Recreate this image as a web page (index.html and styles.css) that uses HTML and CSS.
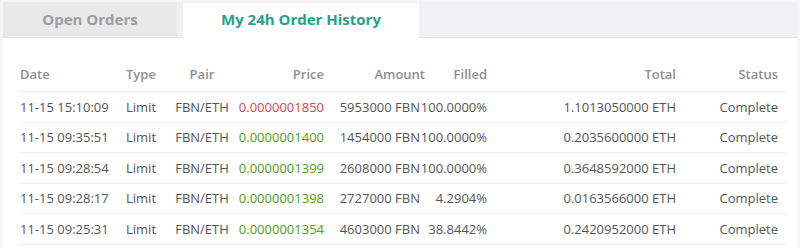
FILE: index.html
```html
<!DOCTYPE html>
<html>
<head>
<meta charset="utf-8">
<link rel="stylesheet" href="styles.css">
</head>
<body>
<div class="panel">
  <div class="tabs">
    <div class="tab tab-open">Open Orders</div>
    <div class="tab tab-active">My 24h Order History</div>
  </div>
  <div class="content">
    <div class="row head">
      <div class="c-left">Date</div>
      <div class="c-left">Type</div>
      <div class="c-center">Pair</div>
      <div class="c-right">Price</div>
      <div class="c-right amount-head">Amount</div>
      <div class="c-right">Filled</div>
      <div class="c-right">Total</div>
      <div class="c-right">Status</div>
    </div>
    <div class="row">
      <div class="c-left">11-15 15:10:09</div>
      <div class="c-left">Limit</div>
      <div class="c-center">FBN/ETH</div>
      <div class="c-right red">0.0000001850</div>
      <div class="c-right">5953000 FBN</div>
      <div class="c-right">100.0000%</div>
      <div class="c-right">1.1013050000 ETH</div>
      <div class="c-right">Complete</div>
    </div>
    <div class="row">
      <div class="c-left">11-15 09:35:51</div>
      <div class="c-left">Limit</div>
      <div class="c-center">FBN/ETH</div>
      <div class="c-right green">0.0000001400</div>
      <div class="c-right">1454000 FBN</div>
      <div class="c-right">100.0000%</div>
      <div class="c-right">0.2035600000 ETH</div>
      <div class="c-right">Complete</div>
    </div>
    <div class="row">
      <div class="c-left">11-15 09:28:54</div>
      <div class="c-left">Limit</div>
      <div class="c-center">FBN/ETH</div>
      <div class="c-right green">0.0000001399</div>
      <div class="c-right">2608000 FBN</div>
      <div class="c-right">100.0000%</div>
      <div class="c-right">0.3648592000 ETH</div>
      <div class="c-right">Complete</div>
    </div>
    <div class="row">
      <div class="c-left">11-15 09:28:17</div>
      <div class="c-left">Limit</div>
      <div class="c-center">FBN/ETH</div>
      <div class="c-right green">0.0000001398</div>
      <div class="c-right">2727000 FBN</div>
      <div class="c-right">4.2904%</div>
      <div class="c-right">0.0163566000 ETH</div>
      <div class="c-right">Complete</div>
    </div>
    <div class="row">
      <div class="c-left">11-15 09:25:31</div>
      <div class="c-left">Limit</div>
      <div class="c-center">FBN/ETH</div>
      <div class="c-right green">0.0000001354</div>
      <div class="c-right">4603000 FBN</div>
      <div class="c-right">38.8442%</div>
      <div class="c-right">0.2420952000 ETH</div>
      <div class="c-right">Complete</div>
    </div>
  </div>
</div>
</body>
</html>
```
FILE: styles.css
```css
html, body {
  margin: 0;
  padding: 0;
}
body {
  background: #f5f5f7;
  font-family: "Open Sans", "Liberation Sans", sans-serif;
  font-size: 13px;
  color: #555555;
  height: 248px;
  overflow: hidden;
}
.panel {
  margin: 2px 0 0 3px;
  width: 794px;
}
.tabs {
  display: flex;
  height: 35px;
  background: #f1f1f3;
  border-bottom: 1px solid #e4e4e6;
}
.tab {
  font-size: 15px;
  font-weight: 700;
  text-align: center;
  line-height: 35px;
}
.tab-open {
  width: 174px;
  background: #e9e9ea;
  color: #9c9ca4;
  margin-right: 6px;
}
.tab-active {
  width: 236px;
  background: #ffffff;
  color: #1fa387;
  margin-top: 1px;
  height: 35px;
  line-height: 33px;
  margin-bottom: -1px;
}
.content {
  background: #ffffff;
  padding: 18px 11px 0 17px;
  height: 210px;
  box-sizing: border-box;
  overflow: hidden;
}
.row {
  display: grid;
  grid-template-columns: 106px 46px 60px 92px 96px 67px 189px 102px;
  align-items: center;
  height: 30.5px;
  box-sizing: border-box;
  border-bottom: 1px solid #efeff1;
  white-space: nowrap;
}
.row.head {
  height: 36px;
  color: #8e8e94;
  font-weight: 600;
}
.c-left { text-align: left; }
.c-center { text-align: center; }
.c-right { text-align: right; }
.amount-head { margin-right: -5px; }
.red { color: #d2474c; }
.green { color: #4f9e14; }
```
